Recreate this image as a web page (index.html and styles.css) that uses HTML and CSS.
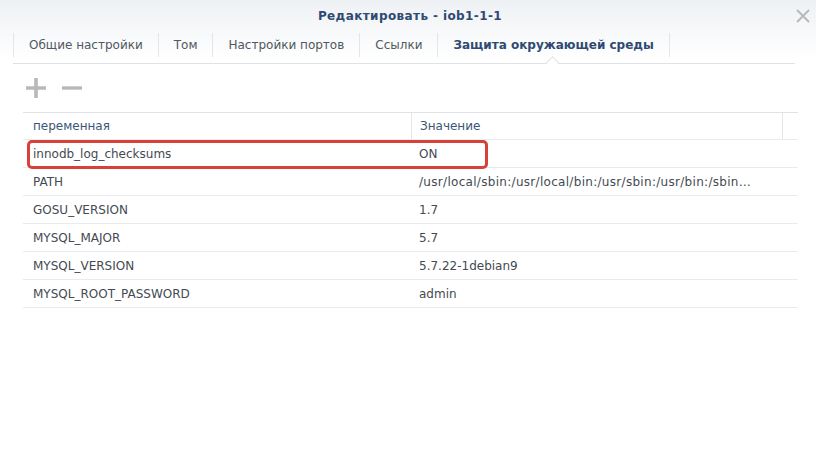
FILE: index.html
```html
<!DOCTYPE html>
<html lang="ru">
<head>
<meta charset="utf-8">
<title>Редактировать - iob1-1-1</title>
<link rel="stylesheet" href="styles.css">
</head>
<body>
<div class="dialog">
  <div class="titlebar">
    <div class="title">Редактировать - iob1-1-1</div>
    <svg class="close" width="14" height="14" viewBox="0 0 14 14"><path d="M1 1 L13 13 M13 1 L1 13" stroke="#b4b8bd" stroke-width="1.8" fill="none"/></svg>
  </div>
  <div class="tabs">
    <div class="tab">Общие настройки</div>
    <div class="tab">Том</div>
    <div class="tab">Настройки портов</div>
    <div class="tab">Ссылки</div>
    <div class="tab active">Защита окружающей среды<span class="notch"></span></div>
  </div>
  <div class="toolbar">
    <svg class="btn" width="22" height="22" viewBox="0 0 22 22"><path d="M11 1 V21 M1 11 H21" stroke="#b9b9b9" stroke-width="3.6" fill="none"/></svg>
    <svg class="btn" width="22" height="22" viewBox="0 0 22 22"><path d="M1 11 H21" stroke="#b9b9b9" stroke-width="3.4" fill="none"/></svg>
  </div>
  <div class="grid">
    <div class="row head">
      <div class="cell c1">переменная</div>
      <div class="cell c2">Значение</div>
      <div class="cell c3"></div>
    </div>
    <div class="row hl">
      <div class="cell c1">innodb_log_checksums</div>
      <div class="cell c2">ON</div>
      <div class="mark"></div>
    </div>
    <div class="row">
      <div class="cell c1">PATH</div>
      <div class="cell c2 wide">/usr/local/sbin:/usr/local/bin:/usr/sbin:/usr/bin:/sbin…</div>
    </div>
    <div class="row">
      <div class="cell c1">GOSU_VERSION</div>
      <div class="cell c2">1.7</div>
    </div>
    <div class="row">
      <div class="cell c1">MYSQL_MAJOR</div>
      <div class="cell c2">5.7</div>
    </div>
    <div class="row">
      <div class="cell c1">MYSQL_VERSION</div>
      <div class="cell c2">5.7.22-1debian9</div>
    </div>
    <div class="row">
      <div class="cell c1">MYSQL_ROOT_PASSWORD</div>
      <div class="cell c2">admin</div>
    </div>
  </div>
</div>
</body>
</html>
```
FILE: styles.css
```css
html, body {
  margin: 0;
  padding: 0;
  background: #ffffff;
}
body {
  width: 816px;
  height: 462px;
  overflow: hidden;
  font-family: "DejaVu Sans", Verdana, sans-serif;
  font-size: 12px;
  color: #434a52;
}
.dialog {
  height: 462px;
  background: linear-gradient(to bottom, #eef1f4 0px, #ffffff 60px, #ffffff 100%);
}
.titlebar {
  position: relative;
  height: 31px;
  display: flex;
  align-items: center;
  justify-content: center;
}
.title {
  font-weight: bold;
  font-size: 12px;
  letter-spacing: 0.4px;
  color: #2e4a72;
  padding-top: 1px;
  padding-left: 4px;
}
.close {
  position: absolute;
  right: 6px;
  top: 9px;
}
.tabs {
  margin: 2px 21px 0 13px;
  height: 30px;
  display: flex;
  border-bottom: 1px solid #dfe2e6;
  position: relative;
}
.tab {
  position: relative;
  height: 24px;
  padding: 0 15px;
  display: flex;
  align-items: center;
  border-left: 1px solid #e3e5e8;
  color: #505860;
  white-space: nowrap;
}
.tab.active {
  font-weight: bold;
  color: #2e4a72;
  border-right: 1px solid #e3e5e8;
}
.notch {
  position: absolute;
  left: 110px;
  bottom: -10px;
  width: 8px;
  height: 8px;
  background: #ffffff;
  border-top: 1px solid #dfe2e6;
  border-left: 1px solid #dfe2e6;
  transform: rotate(45deg);
}
.toolbar {
  display: flex;
  gap: 14px;
  padding: 15px 0 0 25px;
  height: 33px;
  box-sizing: border-box;
  align-items: center;
}
.grid {
  margin: 15px 18px 0 23px;
  border-top: 1px solid #dfe3e8;
}
.row {
  position: relative;
  display: flex;
  height: 27px;
  border-bottom: 1px solid #e9ecef;
  align-items: stretch;
}
.row.head {
  height: 26px;
}
.cell {
  display: flex;
  align-items: center;
  padding-left: 10px;
  box-sizing: border-box;
  white-space: nowrap;
  overflow: hidden;
}
.c1 { width: 388px; }
.c2 { width: 371px; padding-left: 8px; }
.c3 { flex: 1; }
.wide { letter-spacing: 0.3px; }
.head .cell { color: #3a5677; }
.head .c2 { border-left: 1px solid #e3e6ea; }
.head .c3 { border-left: 1px solid #e3e6ea; }
.mark {
  position: absolute;
  left: 4px;
  top: 0px;
  width: 455px;
  height: 23px;
  border: 3px solid #d8403a;
  border-radius: 5px;
}
```
